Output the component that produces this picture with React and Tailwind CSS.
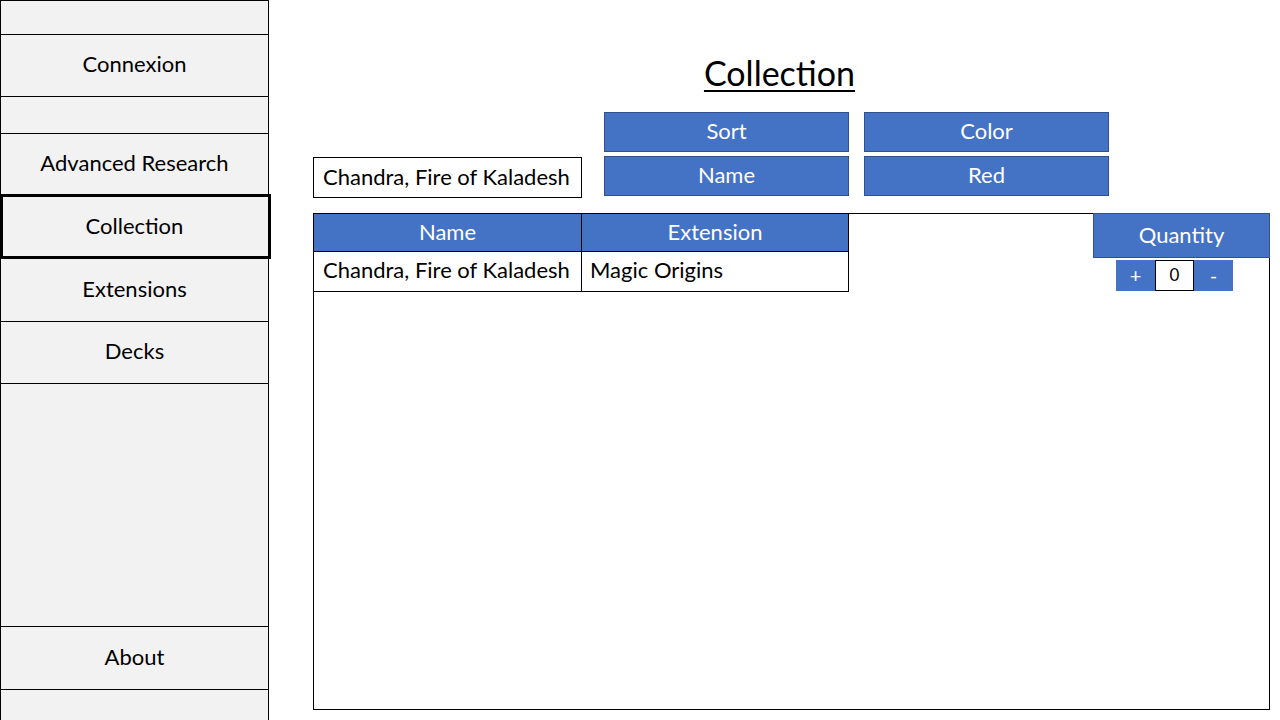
const navItems = [
  { label: "", h: "h-[34px]" },
  { label: "Connexion", h: "h-[62px]" },
  { label: "", h: "h-[37px]" },
  { label: "Advanced Research", h: "h-[62px]" },
  { label: "Collection", h: "h-[63px]", active: true },
  { label: "Extensions", h: "h-[63px]" },
  { label: "Decks", h: "h-[62px]" },
  { label: "", h: "h-[243px]" },
  { label: "About", h: "h-[63px]" },
  { label: "", h: "flex-1", last: true },
]

const BlueBox = ({ children, className = "" }) => (
  <div
    className={`flex items-center justify-center bg-[#4472c4] border border-[#2f528f] text-white text-[22px] leading-none pb-[2px] ${className}`}
  >
    {children}
  </div>
)

export default function App() {
  return (
    <div
      className="w-[1280px] h-[720px] flex bg-white text-black overflow-hidden"
      style={{ fontFamily: "Lato, 'Open Sans', sans-serif" }}
    >
      {/* Sidebar */}
      <div className="w-[269px] h-full flex flex-col bg-[#f2f2f2] border-l border-r border-t border-black shrink-0 relative z-10">
        {navItems.map((item, i) => (
          <div
            key={i}
            className={`relative flex items-center justify-center text-[22px] leading-none pb-[3px] ${item.h} ${
              item.last ? "" : "border-b border-black"
            }`}
          >
            {item.label}
            {item.active && (
              <div className="absolute -left-px -right-[3px] -top-[2px] -bottom-px border-[3px] border-black" />
            )}
          </div>
        ))}
      </div>

      {/* Main */}
      <div className="flex-1 flex flex-col pl-[44px]">
        <div className="h-[112px] flex justify-center pr-[44px] pt-[53px]">
          <h1 className="text-[34px] leading-[40px] underline underline-offset-[4px] decoration-[2px] ml-[10px]">
            Collection
          </h1>
        </div>

        <div className="flex items-start">
          <div className="mt-[45px] w-[269px] h-[41px] border border-black flex items-center px-[9px] pb-[2px] text-[22px] leading-none">
            Chandra, Fire of Kaladesh
          </div>
          <div className="ml-[22px] grid grid-cols-[245px_245px] gap-x-[15px] gap-y-[4px]">
            <BlueBox className="h-[40px]">Sort</BlueBox>
            <BlueBox className="h-[40px]">Color</BlueBox>
            <BlueBox className="h-[40px]">Name</BlueBox>
            <BlueBox className="h-[40px]">Red</BlueBox>
          </div>
        </div>

        <div className="mt-[15px] w-[957px] h-[497px] border border-black flex justify-between items-start">
          <table className="border-collapse text-[22px] leading-none -mt-px -ml-px">
            <thead>
              <tr className="h-[38px]">
                <th className="w-[268px] bg-[#4472c4] border border-black text-white font-normal pb-[2px]">Name</th>
                <th className="w-[267px] bg-[#4472c4] border border-black text-white font-normal pb-[2px]">Extension</th>
              </tr>
            </thead>
            <tbody>
              <tr className="h-[40px]">
                <td className="border border-black px-[9px] pb-[3px]">Chandra, Fire of Kaladesh</td>
                <td className="border border-black px-[8px] pb-[3px]">Magic Origins</td>
              </tr>
            </tbody>
          </table>

          <div className="flex flex-col items-end -mr-px">
            <BlueBox className="w-[177px] h-[45px] -mt-px">Quantity</BlueBox>
            <div className="flex mt-[2px] mr-[37px] h-[31px] text-[20px] leading-none">
              <div className="w-[39px] flex items-center justify-center bg-[#4472c4] text-white pb-[2px]">+</div>
              <div className="w-[39px] flex items-center justify-center bg-white border border-black text-[17px] pb-[3px]">0</div>
              <div className="w-[39px] flex items-center justify-center bg-[#4472c4] text-white pb-[2px]">-</div>
            </div>
          </div>
        </div>
      </div>
    </div>
  )
}
